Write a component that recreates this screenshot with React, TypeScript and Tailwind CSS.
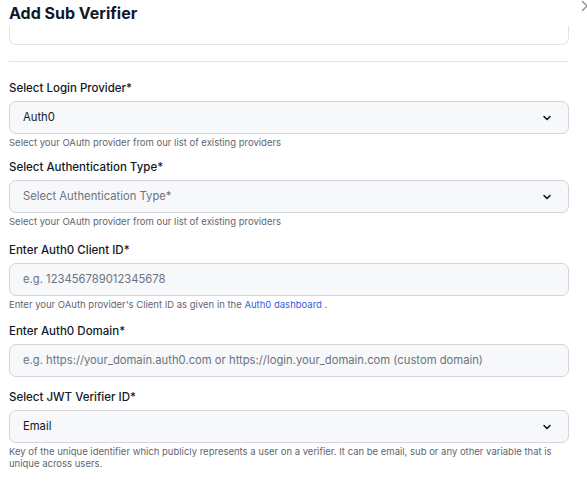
import React from "react";

const Chevron = () => (
  <svg width="10" height="10" viewBox="0 0 10 10" className="shrink-0">
    <path d="M2 3.5 L5 6.5 L8 3.5" fill="none" stroke="#111827" strokeWidth="1.6" strokeLinecap="round" strokeLinejoin="round" />
  </svg>
);

function Label({ children }: { children: React.ReactNode }) {
  return <div className="text-[11.5px] font-medium text-[#111827] leading-[16px] mb-[5px]">{children}</div>;
}

function Help({ children }: { children: React.ReactNode }) {
  return <div className="text-[9.5px] text-[#5f6672] leading-[12px] mt-[3px]">{children}</div>;
}

function SelectBox({ value, placeholder }: { value?: string; placeholder?: string }) {
  return (
    <div className="h-[33px] rounded-[7px] border border-[#d1d5db] bg-[#f7f8fa] flex items-center justify-between pl-[13px] pr-[16px]">
      <span className={"text-[11.25px] " + (value ? "text-[#111827]" : "text-[#6b7280]")}>{value ?? placeholder}</span>
      <Chevron />
    </div>
  );
}

function InputBox({ placeholder }: { placeholder: string }) {
  return (
    <div className="h-[33px] rounded-[7px] border border-[#d1d5db] bg-[#f7f8fa] flex items-center pl-[13px]">
      <span className="text-[11.25px] text-[#6b7280]">{placeholder}</span>
    </div>
  );
}

export default function App() {
  return (
    <div className="w-[587px] h-[495px] bg-white relative overflow-hidden" style={{ fontFamily: "Inter, 'Noto Sans', sans-serif" }}>
      <svg className="absolute left-[581px] top-[0px]" width="12" height="12" viewBox="0 0 12 12">
        <path d="M1.5 1.5 L10.5 10.5 M10.5 1.5 L1.5 10.5" stroke="#8a8f98" strokeWidth="1.3" strokeLinecap="round" />
      </svg>
      <div className="pl-[9px] w-[569px]">
        <h1 className="text-[16px] font-bold text-[#111827] leading-[24px] pt-[1px]">Add Sub Verifier</h1>
        <div className="h-[19px] mt-[1px] border-x border-b border-[#e2e4e8] rounded-b-[7px]" />
        <div className="h-px bg-[#e2e4e8] mt-[16px]" />
        <div className="pt-[18px]">
          <Label>Select Login Provider*</Label>
          <SelectBox value="Auth0" />
          <Help>Select your OAuth provider from our list of existing providers</Help>
        </div>
        <div className="pt-[10px]">
          <Label>Select Authentication Type*</Label>
          <SelectBox placeholder="Select Authentication Type*" />
          <Help>Select your OAuth provider from our list of existing providers</Help>
        </div>
        <div className="pt-[14px]">
          <Label>Enter Auth0 Client ID*</Label>
          <InputBox placeholder="e.g. 123456789012345678" />
          <Help>
            Enter your OAuth provider's Client ID as given in the <span className="text-[#2f5fe0]">Auth0 dashboard</span> .
          </Help>
        </div>
        <div className="pt-[12px]">
          <Label>Enter Auth0 Domain*</Label>
          <InputBox placeholder="e.g. https://your_domain.auth0.com or https://login.your_domain.com (custom domain)" />
        </div>
        <div className="pt-[12px]">
          <Label>Select JWT Verifier ID*</Label>
          <SelectBox value="Email" />
          <Help>
            Key of the unique identifier which publicly represents a user on a verifier. It can be email, sub or any other variable that is unique across users.
          </Help>
        </div>
      </div>
    </div>
  );
}
